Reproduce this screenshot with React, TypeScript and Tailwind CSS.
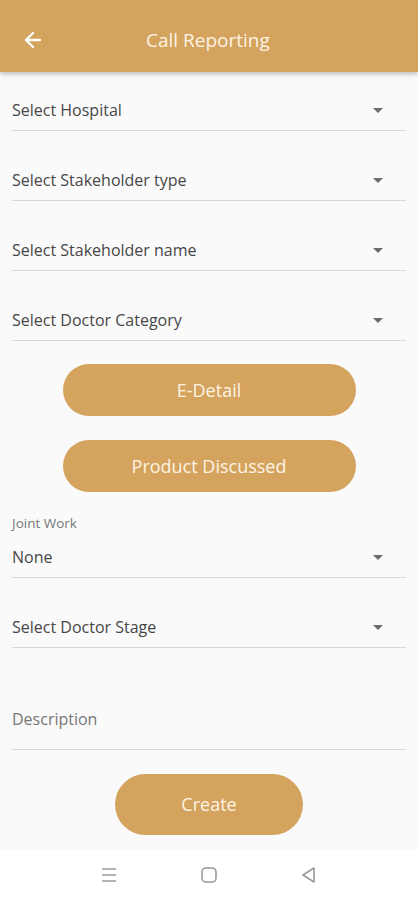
import { ArrowLeft } from "lucide-react";

const font = { fontFamily: "'Open Sans', 'Noto Sans', sans-serif" };

function Caret() {
	return (
		<svg width="12" height="7" viewBox="0 0 12 7" className="mr-[22px]">
			<path d="M1 1h10L6 6z" fill="#6b6b6b" />
		</svg>
	);
}

function SelectField({ label, className = "" }: { label: string; className?: string }) {
	return (
		<div
			className={`flex h-[41px] items-center justify-between border-b border-[#d9d9d9] ${className}`}
		>
			<span className="text-[16px] font-medium text-[#474747]">{label}</span>
			<Caret />
		</div>
	);
}

function PillButton({ children, className = "" }: { children: string; className?: string }) {
	return (
		<button
			type="button"
			className={`mx-auto flex items-center justify-center rounded-full bg-[#d4a35e] text-[18px] text-[#fdf3e4] ${className}`}
		>
			{children}
		</button>
	);
}

export default function App() {
	return (
		<div className="flex h-[900px] w-[418px] flex-col bg-[#fafafa]" style={font}>
			{/* Header */}
			<div className="relative z-10 flex h-[72px] items-center bg-[#d4a35e] px-[21px] pt-[8px] shadow-[0_2px_5px_rgba(0,0,0,0.25)]">
				<ArrowLeft className="h-[24px] w-[24px] text-white" strokeWidth={2.4} />
				<div className="ml-[101px] text-[19px] text-[#fdf3e4]">Call Reporting</div>
			</div>

			{/* Form */}
			<div className="flex-1 px-[12px]">
				<SelectField label="Select Hospital" className="mt-[18px]" />
				<SelectField label="Select Stakeholder type" className="mt-[29px]" />
				<SelectField label="Select Stakeholder name" className="mt-[29px]" />
				<SelectField label="Select Doctor Category" className="mt-[29px]" />

				<PillButton className="mt-[23px] h-[52px] w-[293px]">E-Detail</PillButton>
				<PillButton className="mt-[24px] h-[52px] w-[293px]">Product Discussed</PillButton>

				<div className="mt-[23px] h-[16px] text-[13.5px] leading-[16px] text-[#777]">Joint Work</div>
				<SelectField label="None" className="mt-[6px]" />
				<SelectField label="Select Doctor Stage" className="mt-[29px]" />

				<div className="mt-[41px] flex h-[61px] items-end border-b border-[#d9d9d9] pb-[18px]">
					<span className="text-[16px] text-[#777]">Description</span>
				</div>

				<PillButton className="mt-[24px] h-[61px] w-[188px]">Create</PillButton>
			</div>

			{/* System nav bar */}
			<div className="flex h-[50px] items-center justify-center gap-[82px] bg-white">
				<svg width="18" height="16" viewBox="0 0 18 16">
					<path d="M2 2h14M2 8h14M2 14h14" stroke="#999" strokeWidth="1.6" />
				</svg>
				<svg width="18" height="18" viewBox="0 0 18 18">
					<rect x="2" y="2" width="14" height="14" rx="4" fill="none" stroke="#999" strokeWidth="1.6" />
				</svg>
				<svg width="18" height="18" viewBox="0 0 18 18">
					<path d="M14 2L3 9l11 7z" fill="none" stroke="#999" strokeWidth="1.6" strokeLinejoin="round" />
				</svg>
			</div>
		</div>
	);
}
